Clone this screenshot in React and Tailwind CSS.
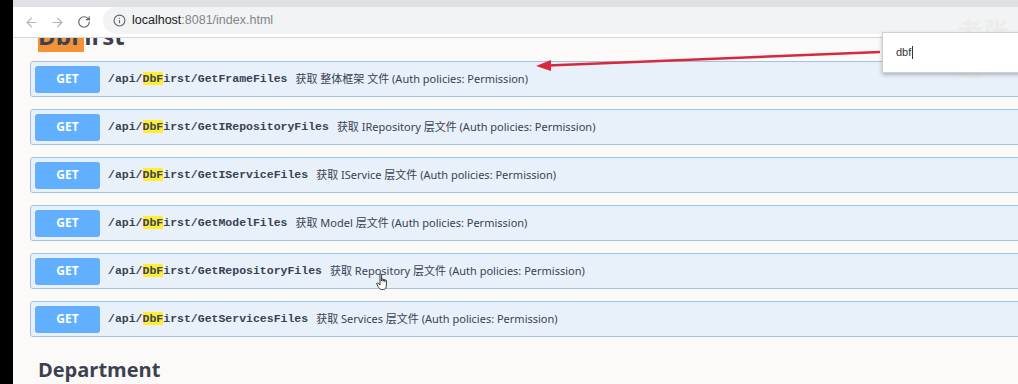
import { ArrowLeft, ArrowRight, RotateCw, Info } from 'lucide-react';

const rows = [
    { name: 'GetFrameFiles', desc: '获取 整体框架 文件' },
    { name: 'GetIRepositoryFiles', desc: '获取 IRepository 层文件' },
    { name: 'GetIServiceFiles', desc: '获取 IService 层文件' },
    { name: 'GetModelFiles', desc: '获取 Model 层文件' },
    { name: 'GetRepositoryFiles', desc: '获取 Repository 层文件' },
    { name: 'GetServicesFiles', desc: '获取 Services 层文件' },
];

function OpBlock({ name, desc }) {
    return (
        <div className="flex items-center h-[36px] w-[1100px] border border-[#a3c2e2] bg-[#e8f1fa] rounded-[3px] pl-[4px]">
            <div className="w-[65px] h-[27px] rounded-[3px] bg-[#61affe] flex items-center justify-center text-white text-[12px] font-bold font-['Open_Sans',sans-serif]">
                GET
            </div>
            <div className="ml-[8px] font-['Liberation_Mono',monospace] font-bold text-[11.5px] text-[#3b4151] whitespace-nowrap">
                /api/<span className="bg-[#ffee33]">DbF</span>irst/{name}
            </div>
            <div className="ml-[8px] text-[11px] text-[#3b4151] whitespace-nowrap font-['Noto_Sans','Noto_Sans_CJK_SC',sans-serif]">
                {desc} (Auth policies: Permission)
            </div>
        </div>
    );
}

export default function App() {
    return (
        <div className="relative w-[1018px] h-[384px] flex overflow-hidden bg-black">
            <div className="w-[13px] shrink-0 bg-black"></div>
            <div className="flex-1 flex flex-col bg-white overflow-hidden">
                {/* browser chrome */}
                <div className="h-[7px] bg-[#dfe1e5] shrink-0"></div>
                <div className="h-[31px] shrink-0 flex items-center bg-white border-b border-[#d6d6d6]">
                    <ArrowLeft className="ml-[11px] text-[#b0b4b8]" size={15} strokeWidth={1.8} />
                    <ArrowRight className="ml-[11px] text-[#b0b4b8]" size={15} strokeWidth={1.8} />
                    <RotateCw className="ml-[12px] text-[#5f6368]" size={14} strokeWidth={2} />
                    <div className="ml-[12px] flex-1 self-stretch mb-[3px] rounded-l-full bg-[#f1f3f4] flex items-center">
                        <Info className="ml-[10px] text-[#5f6368]" size={13} strokeWidth={2} />
                        <span className="ml-[6px] text-[12.5px] font-['Liberation_Sans',sans-serif] text-[#202124]">
                            localhost<span className="text-[#80868b]">:8081/index.html</span>
                        </span>
                    </div>
                </div>
                {/* page */}
                <div className="flex-1 overflow-hidden bg-[#fbfaf9] pl-[17px]">
                    <div className="-mt-[17px] ml-[8px] h-[30px] leading-[30px] text-[24px] font-bold text-[#3b4151] font-['Open_Sans',sans-serif]">
                        <span className="bg-[#f39236]">DbF</span>irst
                    </div>
                    <div className="mt-[10px] flex flex-col gap-[12px]">
                        {rows.map((r) => (
                            <OpBlock key={r.name} name={r.name} desc={r.desc} />
                        ))}
                    </div>
                    <div className="mt-[18px] ml-[8px] h-[30px] leading-[30px] text-[20px] font-bold text-[#3b4151] font-['Open_Sans',sans-serif]">
                        Department
                    </div>
                </div>
            </div>

            {/* watermark */}
            <div className="absolute left-[958px] top-[12px] text-[24px] font-bold text-[#ececec] font-['Noto_Sans_CJK_SC',sans-serif] tracking-[2px] pointer-events-none">
                老张的
            </div>

            {/* find popup */}
            <div className="absolute left-[882px] top-[32px] w-[150px] h-[41px] bg-white border border-[#cfcfcf] shadow-[0_2px_4px_rgba(0,0,0,0.25)] flex items-center">
                <span className="ml-[13px] text-[11px] text-[#333] font-['Liberation_Sans',sans-serif]">dbf</span>
                <span className="w-px h-[13px] bg-[#333] ml-px"></span>
            </div>

            {/* annotation arrow */}
            <svg className="absolute left-0 top-0 pointer-events-none" width="1018" height="384">
                <line x1="880" y1="52" x2="548" y2="65.5" stroke="#d8283c" strokeWidth="2.4" />
                <polygon points="536,66 551,60 551,71" fill="#d8283c" />
            </svg>

            {/* mouse cursor */}
            <svg className="absolute left-[376px] top-[273px] pointer-events-none" width="14" height="18" viewBox="0 0 14 18">
                <path
                    d="M4 1.5 C4 0.7 5.6 0.7 5.6 1.5 V8 V6.5 C5.6 5.7 7.2 5.7 7.2 6.5 V8.2 V7 C7.2 6.2 8.8 6.2 8.8 7 V8.6 V7.6 C8.8 6.8 10.4 6.8 10.4 7.6 V12 C10.4 14.5 9.5 16.5 7.5 16.5 H5.5 C4 16.5 3 15 2 13.5 L0.8 11 C0.4 10.2 1.4 9.5 2.1 10.3 L4 12 Z"
                    fill="white"
                    stroke="#222"
                    strokeWidth="0.9"
                    strokeLinejoin="round"
                />
            </svg>
        </div>
    );
}
